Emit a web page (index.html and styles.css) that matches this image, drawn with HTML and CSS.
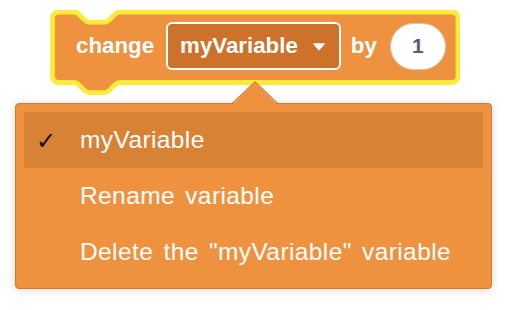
FILE: index.html
```html
<!DOCTYPE html>
<html>
<head>
<meta charset="utf-8">
<link rel="stylesheet" href="styles.css">
</head>
<body>
<div class="workspace">
  <div class="block">
    <svg class="block-shape" width="410" height="86" viewBox="0 0 410 86">
      <path d="M2.5 8 a6 6 0 0 1 6 -6 H24 c2.5,0 3.8,1.3 5.1,2.5 l5.1,5.1 c1.3,1.3 2.5,2.5 5.1,2.5 h15.2 c2.5,0 3.8,-1.3 5.1,-2.5 l5.1,-5.1 c1.3,-1.3 2.5,-2.5 5.1,-2.5 H402 a6 6 0 0 1 6 6 V66.5 a6 6 0 0 1 -6 6 H69.8 c-2.5,0 -3.8,1.3 -5.1,2.5 l-5.1,5.1 c-1.3,1.3 -2.5,2.5 -5.1,2.5 h-15.2 c-2.5,0 -3.8,-1.3 -5.1,-2.5 l-5.1,-5.1 c-1.3,-1.3 -2.5,-2.5 -5.1,-2.5 H8.5 a6 6 0 0 1 -6 -6 Z" fill="#EF9240" stroke="#FDEB3C" stroke-width="4.8" stroke-linejoin="round"/>
    </svg>
    <div class="block-row">
      <span class="label">change</span>
      <div class="dropdown">
        <span class="dd-text">myVariable</span>
        <svg class="dd-arrow" width="12" height="8" viewBox="0 0 12 8"><path d="M0.5 0.8 H11.5 L6 7.2 Z" fill="#fff" stroke="#fff" stroke-width="1" stroke-linejoin="round"/></svg>
      </div>
      <span class="label by">by</span>
      <div class="num">1</div>
    </div>
  </div>
  <div class="menu">
    <svg class="menu-arrow" width="48" height="24" viewBox="0 0 48 24">
      <polygon points="1.2,24 24,1.6 46.8,24" fill="#EF9240"/>
      <polyline points="0.6,23.2 24,0.9 47.4,23.2" fill="none" stroke="#D9792C" stroke-width="1.3" stroke-linejoin="round"/>
    </svg>
    <div class="item selected"><span class="check">✓</span>myVariable</div>
    <div class="item">Rename variable</div>
    <div class="item">Delete the "myVariable" variable</div>
  </div>
</div>
</body>
</html>
```
FILE: styles.css
```css
html, body {
  margin: 0;
  padding: 0;
  background: #ffffff;
}
.workspace {
  position: relative;
  width: 508px;
  height: 310px;
  overflow: hidden;
}
.block {
  position: relative;
  margin: 10px 0 0 50px;
  width: 410px;
  height: 86px;
}
.block-shape {
  position: absolute;
  left: 0;
  top: 0;
}
.block-row {
  position: relative;
  display: flex;
  align-items: center;
  height: 48px;
  padding: 12px 0 0 26px;
  font-family: "Liberation Sans", Arial, sans-serif;
  font-weight: bold;
  font-size: 22.3px;
  color: #ffffff;
}
.label {
  line-height: 48px;
}
.dropdown {
  margin-left: 12px;
  box-sizing: border-box;
  height: 48px;
  border: 2px solid #ffffff;
  border-radius: 6px;
  background: #CE722B;
  display: flex;
  align-items: center;
  padding: 0 14px 0 12px;
}
.dd-arrow {
  margin-left: 15px;
  margin-top: 1px;
}
.by {
  margin-left: 10px;
}
.num {
  margin-left: 13px;
  box-sizing: border-box;
  width: 56px;
  height: 47px;
  border: 1px solid #d6c3b2;
  border-radius: 24px;
  background: #ffffff;
  color: #575E75;
  font-size: 21px;
  display: flex;
  align-items: center;
  justify-content: center;
}
.menu {
  position: absolute;
  left: 15px;
  top: 103px;
  width: 459px;
  padding: 8px;
  border: 1px solid #D9792C;
  border-radius: 4px;
  background: #EF9240;
  box-shadow: 0 1px 10px rgba(0, 0, 0, 0.16);
  font-family: "Liberation Sans", Arial, sans-serif;
  font-size: 24.5px;
  letter-spacing: 0.4px;
  word-spacing: 3px;
  color: #ffffff;
}
.menu-arrow {
  position: absolute;
  left: 215px;
  top: -23px;
}
.item {
  position: relative;
  height: 56px;
  line-height: 56px;
  padding-left: 56px;
}
.item.selected {
  background: #D88236;
}
.check {
  position: absolute;
  left: 12px;
  top: 1px;
  font-family: "DejaVu Sans", sans-serif;
  font-weight: bold;
  font-size: 24px;
  color: #111111;
}
```
